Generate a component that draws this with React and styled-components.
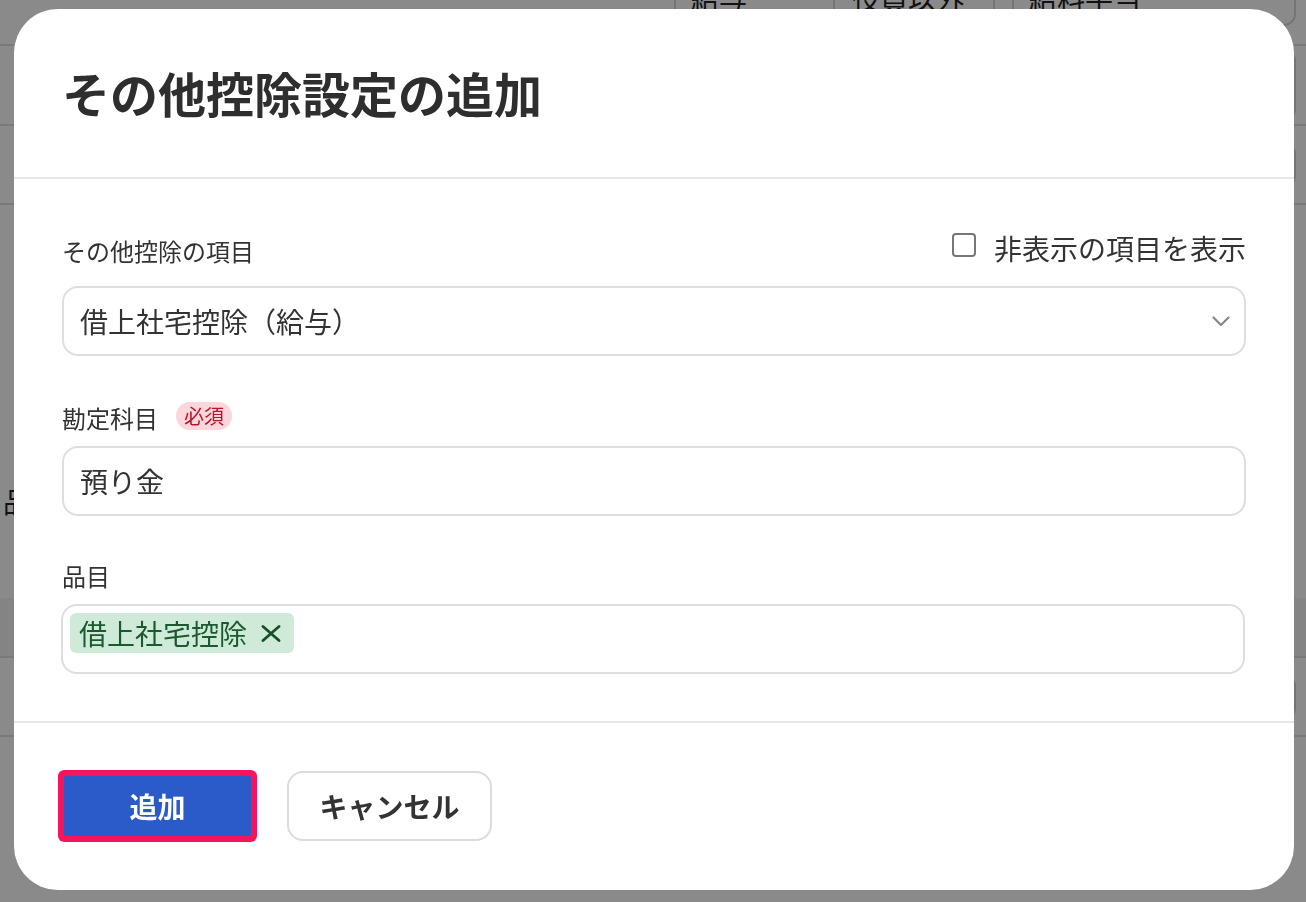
import React from 'react';
import styled, { createGlobalStyle } from 'styled-components';

const GlobalStyle = createGlobalStyle`
  *, *::before, *::after { box-sizing: border-box; }
  html, body { margin: 0; padding: 0; }
  body {
    width: 1306px;
    height: 902px;
    overflow: hidden;
    background: #fff;
    color: #333;
    font-family: "Noto Sans CJK JP", "Noto Sans", sans-serif;
  }
  button { font-family: inherit; }
`;

/* ---------- background page (dimmed behind the dialog) ---------- */

const Page = styled.div`
  width: 1306px;
  height: 902px;
  background: #fff;
  display: flex;
  flex-direction: column;
  overflow: hidden;
`;

const PageRow = styled.div`
  flex: none;
  height: ${(p) => p.$h}px;
  display: flex;
  align-items: ${(p) => p.$align || 'center'};
  justify-content: space-between;
  padding: ${(p) => p.$pad || '0 10px 0 3px'};
  border-bottom: ${(p) => (p.$line ? '2px solid #e0e0e0' : 'none')};
  background: ${(p) => p.$bg || 'transparent'};
`;

const TabGroup = styled.div`
  display: flex;
  gap: 17px;
  margin-left: auto;
`;

const Segmented = styled.div`
  display: flex;
  height: 70px;
  border: 2px solid #d6d6d6;
  border-radius: 12px;
  overflow: hidden;
`;

const Segment = styled.div`
  width: ${(p) => p.$w}px;
  display: flex;
  align-items: flex-end;
  padding: 0 0 5px 15px;
  font-size: 28px;
  line-height: 42px;
  color: #222;
  & + & { border-left: 2px solid #d6d6d6; padding-left: 17px; }
`;

const PageBox = styled.div`
  width: 300px;
  height: ${(p) => p.$h}px;
  border: 2px solid #d6d6d6;
  border-radius: 12px;
  margin-left: auto;
`;

const PageText = styled.span`
  font-size: 28px;
  line-height: 42px;
  color: #222;
`;

/* ---------- dialog ---------- */

const Overlay = styled.div`
  position: fixed;
  inset: 0;
  background: rgba(0, 0, 0, 0.46);
  display: flex;
  align-items: flex-start;
  padding: 9px 0 0 14px;
`;

const Dialog = styled.div`
  width: 1280px;
  background: #fff;
  border-radius: 44px;
  overflow: hidden;
  display: flex;
  flex-direction: column;
`;

const Header = styled.header`
  padding: 47px 48px 49px;
  border-bottom: 2px solid #e6e6e6;
`;

const Title = styled.h1`
  margin: 0;
  font-size: 48px;
  line-height: 72px;
  font-weight: 700;
  color: #2e2e2e;
`;

const Body = styled.div`
  padding: 51px 48px 47px;
  display: flex;
  flex-direction: column;
`;

const Field = styled.div`
  display: flex;
  flex-direction: column;
  margin-top: ${(p) => p.$gap || 0}px;
`;

const FieldHead = styled.div`
  display: flex;
  align-items: center;
  justify-content: ${(p) => (p.$split ? 'space-between' : 'flex-start')};
  gap: 18px;
  height: ${(p) => (p.$split ? 42 : 36)}px;
  margin-bottom: ${(p) => (p.$split ? 14 : 10)}px;
`;

const Label = styled.span`
  font-size: 24px;
  line-height: 36px;
  color: #333;
`;

const RequiredBadge = styled.span`
  display: inline-flex;
  align-items: center;
  height: 28px;
  padding: 0 8px;
  border-radius: 14px;
  background: #fbd6db;
  color: #b8152c;
  font-size: 20px;
  line-height: 28px;
  margin-bottom: 4px;
`;

const CheckRow = styled.label`
  display: flex;
  align-items: center;
  gap: 18px;
  margin-bottom: 6px;
`;

const CheckBox = styled.span`
  width: 24px;
  height: 24px;
  border: 2px solid #777;
  border-radius: 4px;
  background: #fff;
  margin-bottom: 6px;
`;

const CheckText = styled.span`
  font-size: 28px;
  line-height: 42px;
  color: #333;
`;

const Control = styled.div`
  height: 70px;
  border: 2px solid #dedede;
  border-radius: 16px;
  background: #fff;
  display: flex;
  align-items: center;
  justify-content: space-between;
  padding: 0 14px 0 16px;
`;

const Value = styled.span`
  font-size: 28px;
  line-height: 40px;
  color: #333;
`;

const TagBox = styled.div`
  min-height: 70px;
  border: 2px solid #dedede;
  border-radius: 16px;
  background: #fff;
  display: flex;
  flex-wrap: wrap;
  align-items: flex-start;
  gap: 8px;
  padding: 7px;
  margin-left: -1px;
  margin-right: 1px;
`;

const Chip = styled.span`
  display: inline-flex;
  align-items: center;
  gap: 14px;
  height: 40px;
  padding: 0 13px 0 9px;
  border-radius: 6px;
  background: #cfead8;
  color: #1b5a2e;
  font-size: 28px;
  line-height: 40px;
`;

const Footer = styled.footer`
  border-top: 2px solid #e6e6e6;
  padding: 48px 48px 49px 50px;
  display: flex;
  align-items: center;
  gap: 36px;
`;

const PrimaryButton = styled.button`
  width: 187px;
  height: 60px;
  border: none;
  border-radius: 2px;
  background: #2a5bc8;
  color: #fff;
  font-size: 28px;
  font-weight: 700;
  box-shadow: 0 0 0 6px #f6145f;
`;

const SecondaryButton = styled.button`
  width: 205px;
  height: 70px;
  border: 2px solid #dcdcdc;
  border-radius: 16px;
  background: #fff;
  color: #333;
  font-size: 28px;
  font-weight: 700;
`;

const Chevron = () => (
  <svg width="18" height="11" viewBox="0 0 18 11" fill="none">
    <path d="M1.5 1.5 L9 9 L16.5 1.5" stroke="#888" strokeWidth="2.2" strokeLinecap="round" strokeLinejoin="round" />
  </svg>
);

const CloseX = () => (
  <svg width="20" height="17" viewBox="0 0 20 17" fill="none">
    <path d="M2 1.5 L18 15.5 M18 1.5 L2 15.5" stroke="#14512a" strokeWidth="2.8" strokeLinecap="round" />
  </svg>
);

export default function App() {
  return (
    <>
      <GlobalStyle />
      <Page>
        <PageRow $h={46} $line $align="flex-end" $pad="0 10px 18px 3px">
          <TabGroup>
            <Segmented>
              <Segment $w={157}>給与</Segment>
              <Segment $w={160}>役員以外</Segment>
            </Segmented>
            <Segmented>
              <Segment $w={280}>給料手当</Segment>
            </Segmented>
          </TabGroup>
        </PageRow>
        <PageRow $h={80} $line>
          <PageBox $h={72} />
        </PageRow>
        <PageRow $h={79} $line>
          <PageBox $h={46} />
        </PageRow>
        <PageRow $h={393} $align="flex-start" $pad="275px 10px 0 3px">
          <PageText>品目</PageText>
        </PageRow>
        <PageRow $h={60} $bg="#f4f4f4" $line />
        <PageRow $h={79} $line>
          <PageBox $h={46} />
        </PageRow>
      </Page>

      <Overlay>
        <Dialog role="dialog" aria-modal="true">
          <Header>
            <Title>その他控除設定の追加</Title>
          </Header>

          <Body>
            <Field>
              <FieldHead $split>
                <Label>その他控除の項目</Label>
                <CheckRow>
                  <CheckBox />
                  <CheckText>非表示の項目を表示</CheckText>
                </CheckRow>
              </FieldHead>
              <Control>
                <Value>借上社宅控除（給与）</Value>
                <Chevron />
              </Control>
            </Field>

            <Field $gap={44}>
              <FieldHead>
                <Label>勘定科目</Label>
                <RequiredBadge>必須</RequiredBadge>
              </FieldHead>
              <Control>
                <Value>預り金</Value>
              </Control>
            </Field>

            <Field $gap={42}>
              <FieldHead>
                <Label>品目</Label>
              </FieldHead>
              <TagBox>
                <Chip>
                  借上社宅控除
                  <CloseX />
                </Chip>
              </TagBox>
            </Field>
          </Body>

          <Footer>
            <PrimaryButton>追加</PrimaryButton>
            <SecondaryButton>キャンセル</SecondaryButton>
          </Footer>
        </Dialog>
      </Overlay>
    </>
  );
}
